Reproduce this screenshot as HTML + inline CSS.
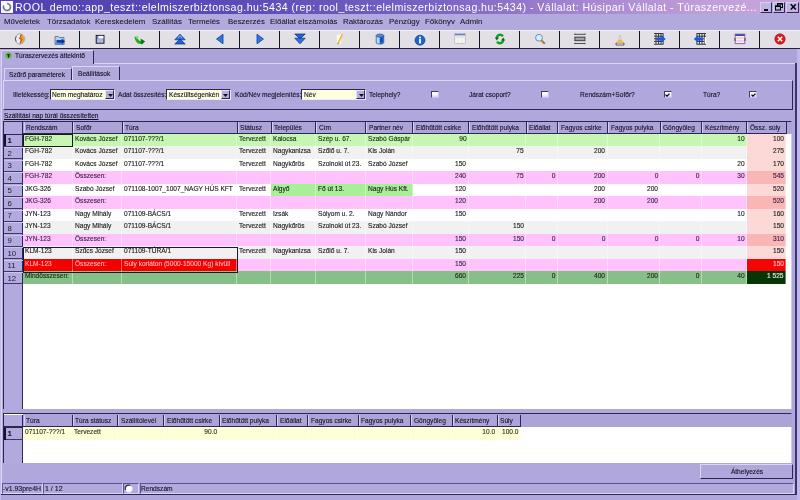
<!DOCTYPE html>
<html><head><meta charset="utf-8">
<style>
*{margin:0;padding:0;box-sizing:border-box}
html,body{width:800px;height:500px;overflow:hidden;background:#b0a8dc;font-family:"Liberation Sans",sans-serif;color:#141224}
.t{position:absolute;white-space:nowrap;text-decoration-skip-ink:none;-webkit-text-stroke:0.14px currentColor}
.b{position:absolute}
#w{position:absolute;left:0;top:0;width:800px;height:500px;filter:blur(0.3px)}
</style></head><body><div id="w">
<div class="b" style="left:0.00px;top:0.00px;width:800.00px;height:13.50px;background:linear-gradient(90deg,#5040b0 0%,#5c4cb8 30%,#7a64c4 55%,#a484d0 72%,#c09ed8 88%,#c8a6dc 100%);"></div>
<div class="b" style="left:1.00px;top:1.00px;width:12.00px;height:12.00px;background:#f6f6fc;"></div>
<svg class="b" style="left:2px;top:2px" width="10" height="10" viewBox="0 0 10 10"><path d="M5 1.5 A3.5 3.5 0 1 1 1.8 3.5" fill="none" stroke="#6a7a7a" stroke-width="1.6"/></svg>
<span class="t" style="top:1.83px;font-size:10.6px;line-height:10.6px;color:#ffffff;left:15.00px;transform:scaleX(1.0);transform-origin:0 0;letter-spacing:0.45px;-webkit-text-stroke:0;">ROOL demo::app_teszt::elelmiszerbiztonsag.hu:5434 (rep: rool_teszt::elelmiszerbiztonsag.hu:5434) - Vállalat: Húsipari Vállalat - Túraszervezé...</span>
<div class="b" style="left:760.00px;top:1.50px;width:12.00px;height:11.00px;background:#bcb4e4;border-style:solid;border-width:1px 1.4px 1.4px 1px;border-color:#d4cef2 #2c2858 #2c2858 #d4cef2;"></div>
<div class="b" style="left:773.00px;top:1.50px;width:12.00px;height:11.00px;background:#bcb4e4;border-style:solid;border-width:1px 1.4px 1.4px 1px;border-color:#d4cef2 #2c2858 #2c2858 #d4cef2;"></div>
<div class="b" style="left:786.00px;top:1.50px;width:13.00px;height:11.00px;background:#bcb4e4;border-style:solid;border-width:1px 1.4px 1.4px 1px;border-color:#d4cef2 #2c2858 #2c2858 #d4cef2;"></div>
<div class="b" style="left:763.50px;top:9.00px;width:4.50px;height:1.50px;background:#000;"></div>
<svg class="b" style="left:774px;top:3px" width="10" height="8" viewBox="0 0 10 8"><rect x="3.5" y="0.5" width="5" height="4" fill="none" stroke="#000" stroke-width="1"/><rect x="1.5" y="2.8" width="5" height="4.2" fill="#b8b0e0" stroke="#000" stroke-width="1"/><rect x="1.5" y="2.8" width="5" height="1.2" fill="#000"/><rect x="3.5" y="0.5" width="5" height="1.2" fill="#000"/></svg>
<svg class="b" style="left:788.5px;top:3px" width="9" height="8" viewBox="0 0 9 8"><path d="M1.8 1.2 L6.8 6.6 M6.8 1.2 L1.8 6.6" stroke="#000" stroke-width="1.4"/></svg>
<div class="b" style="left:0.00px;top:13.50px;width:800.00px;height:16.50px;background:#b2aadc;"></div>
<span class="t" style="top:18.21px;font-size:7.9px;line-height:7.9px;left:4.00px;transform:scaleX(1.0);transform-origin:0 0;-webkit-text-stroke:0.05px currentColor;">Műveletek</span>
<span class="t" style="top:18.21px;font-size:7.9px;line-height:7.9px;left:47.00px;transform:scaleX(1.0);transform-origin:0 0;-webkit-text-stroke:0.05px currentColor;">Törzsadatok</span>
<span class="t" style="top:18.21px;font-size:7.9px;line-height:7.9px;left:95.00px;transform:scaleX(1.0);transform-origin:0 0;-webkit-text-stroke:0.05px currentColor;">Kereskedelem</span>
<span class="t" style="top:18.21px;font-size:7.9px;line-height:7.9px;left:152.00px;transform:scaleX(1.0);transform-origin:0 0;-webkit-text-stroke:0.05px currentColor;">Szállítás</span>
<span class="t" style="top:18.21px;font-size:7.9px;line-height:7.9px;left:188.00px;transform:scaleX(1.0);transform-origin:0 0;-webkit-text-stroke:0.05px currentColor;">Termelés</span>
<span class="t" style="top:18.21px;font-size:7.9px;line-height:7.9px;left:228.00px;transform:scaleX(1.0);transform-origin:0 0;-webkit-text-stroke:0.05px currentColor;">Beszerzés</span>
<span class="t" style="top:18.21px;font-size:7.9px;line-height:7.9px;left:270.00px;transform:scaleX(1.0);transform-origin:0 0;-webkit-text-stroke:0.05px currentColor;">Előállat elszámolás</span>
<span class="t" style="top:18.21px;font-size:7.9px;line-height:7.9px;left:343.00px;transform:scaleX(1.0);transform-origin:0 0;-webkit-text-stroke:0.05px currentColor;">Raktározás</span>
<span class="t" style="top:18.21px;font-size:7.9px;line-height:7.9px;left:389.00px;transform:scaleX(1.0);transform-origin:0 0;-webkit-text-stroke:0.05px currentColor;">Pénzügy</span>
<span class="t" style="top:18.21px;font-size:7.9px;line-height:7.9px;left:425.00px;transform:scaleX(1.0);transform-origin:0 0;-webkit-text-stroke:0.05px currentColor;">Főkönyv</span>
<span class="t" style="top:18.21px;font-size:7.9px;line-height:7.9px;left:460.00px;transform:scaleX(1.0);transform-origin:0 0;-webkit-text-stroke:0.05px currentColor;">Admin</span>
<div class="b" style="left:0.00px;top:29.50px;width:800.00px;height:19.00px;background:#e2e0e4;border-top:1px solid #f4f2f8;border-bottom:1px solid #24223a;"></div>
<div class="b" style="left:39.00px;top:30.50px;width:1.20px;height:17.50px;background:#161428;"></div>
<div class="b" style="left:79.00px;top:30.50px;width:1.20px;height:17.50px;background:#161428;"></div>
<div class="b" style="left:119.00px;top:30.50px;width:1.20px;height:17.50px;background:#161428;"></div>
<div class="b" style="left:159.00px;top:30.50px;width:1.20px;height:17.50px;background:#161428;"></div>
<div class="b" style="left:199.00px;top:30.50px;width:1.20px;height:17.50px;background:#161428;"></div>
<div class="b" style="left:239.00px;top:30.50px;width:1.20px;height:17.50px;background:#161428;"></div>
<div class="b" style="left:279.00px;top:30.50px;width:1.20px;height:17.50px;background:#161428;"></div>
<div class="b" style="left:319.00px;top:30.50px;width:1.20px;height:17.50px;background:#161428;"></div>
<div class="b" style="left:359.00px;top:30.50px;width:1.20px;height:17.50px;background:#161428;"></div>
<div class="b" style="left:399.00px;top:30.50px;width:1.20px;height:17.50px;background:#161428;"></div>
<div class="b" style="left:439.00px;top:30.50px;width:1.20px;height:17.50px;background:#161428;"></div>
<div class="b" style="left:479.00px;top:30.50px;width:1.20px;height:17.50px;background:#161428;"></div>
<div class="b" style="left:519.00px;top:30.50px;width:1.20px;height:17.50px;background:#161428;"></div>
<div class="b" style="left:559.00px;top:30.50px;width:1.20px;height:17.50px;background:#161428;"></div>
<div class="b" style="left:599.00px;top:30.50px;width:1.20px;height:17.50px;background:#161428;"></div>
<div class="b" style="left:639.00px;top:30.50px;width:1.20px;height:17.50px;background:#161428;"></div>
<div class="b" style="left:679.00px;top:30.50px;width:1.20px;height:17.50px;background:#161428;"></div>
<div class="b" style="left:719.00px;top:30.50px;width:1.20px;height:17.50px;background:#161428;"></div>
<div class="b" style="left:759.00px;top:30.50px;width:1.20px;height:17.50px;background:#161428;"></div>
<svg class="b" style="left:14.00px;top:33.00px" width="12" height="12" viewBox="0 0 12 12"><path d="M6 0.8 L8 1.4 L9.8 3 L10.8 6 L9.8 9 L8 10.6 L6 11.2 L4 10.6 L2.2 9 L1.2 6 L2.2 3 L4 1.4Z" fill="#ececf4" stroke="#8a8a9a" stroke-width="0.7"/>
<path d="M6 1.2 L8 1.6 L9.6 3.2 L10.4 6 L9.6 8.8 L8 10.4 L6 10.8Z" fill="#f0a040"/>
<path d="M7.6 1.6 L5.6 5.4 L8 6.2 L6 10.6" fill="none" stroke="#b85c10" stroke-width="1.1"/>
<path d="M2.2 3.4 L1.4 6 L2.2 8.6" fill="none" stroke="#505060" stroke-width="0.9"/></svg>
<svg class="b" style="left:54.00px;top:33.80px" width="12" height="12" viewBox="0 0 12 12"><path d="M1 2.5 H4.5 L5.5 3.5 H10 V10.5 H1Z" fill="#a8d4f4" stroke="#40607a" stroke-width="0.7"/><path d="M1.5 6 H10.5 V10.5 H1.5Z" fill="#5890d8"/>
<path d="M3 6.2 H7.6 V4.6 L11 7.4 L7.6 10 V8.6 H3Z" fill="#0c2ca0"/></svg>
<svg class="b" style="left:94.00px;top:33.30px" width="12" height="12" viewBox="0 0 12 12"><rect x="2.2" y="2.4" width="7.8" height="7.8" fill="#8088b8" stroke="#1c1c38" stroke-width="1"/>
<rect x="4.4" y="2.9" width="5" height="2.6" fill="#ffffff"/><rect x="3" y="6.2" width="6.2" height="3.4" fill="#b0b8e0"/></svg>
<svg class="b" style="left:134.00px;top:33.50px" width="12" height="12" viewBox="0 0 12 12"><path d="M2 2.8 C2.2 7.5 5.5 9.4 8.6 8" fill="none" stroke="#20b020" stroke-width="3.2"/>
<path d="M6.6 4.6 L11.2 7.6 L7.4 10.6Z" fill="#107010"/><circle cx="3.2" cy="3.6" r="1.3" fill="#70e070"/></svg>
<svg class="b" style="left:174.00px;top:33.00px" width="12" height="12" viewBox="0 0 12 12"><path d="M0.8 6.8 L6 1.2 L11.2 6.8Z" fill="#2a74e8" stroke="#0e2a6a" stroke-width="0.7"/>
<path d="M0.8 11 L6 6 L11.2 11Z" fill="#1e64e0" stroke="#0e2a6a" stroke-width="0.7"/><path d="M4 4.6 L6 2.8 L8 4.6" fill="none" stroke="#9cd0ff" stroke-width="0.8"/></svg>
<svg class="b" style="left:214.00px;top:33.20px" width="12" height="12" viewBox="0 0 12 12"><path d="M2.5 6 L9 1.2 L9 10.8Z" fill="#2c78e8" stroke="#103c90" stroke-width="0.8"/></svg>
<svg class="b" style="left:254.00px;top:33.20px" width="12" height="12" viewBox="0 0 12 12"><path d="M9.5 6 L3 1.2 L3 10.8Z" fill="#2c78e8" stroke="#103c90" stroke-width="0.8"/></svg>
<svg class="b" style="left:294.00px;top:33.20px" width="12" height="12" viewBox="0 0 12 12"><path d="M0.8 1 L11.2 1 L6 6Z" fill="#1e64e0" stroke="#0e2a6a" stroke-width="0.7"/>
<path d="M0.8 5.2 L11.2 5.2 L6 10.8Z" fill="#2a74e8" stroke="#0e2a6a" stroke-width="0.7"/></svg>
<svg class="b" style="left:334.00px;top:33.00px" width="12" height="12" viewBox="0 0 12 12"><path d="M2.6 2 L7 1 L7.4 10.4 L3 11.2Z" fill="#fbf8ee"/><path d="M3.6 9.8 L7.6 0.8 L9 1.6 L5 10.6Z" fill="#eeb828"/><path d="M3.6 9.8 L5 10.6 L3.4 11.4Z" fill="#805020"/></svg>
<svg class="b" style="left:374.00px;top:33.20px" width="12" height="12" viewBox="0 0 12 12"><path d="M2.2 2.6 V9.6 C2.2 11.6 9.8 11.6 9.8 9.6 V2.6Z" fill="#3a78d0" stroke="#1a3a80" stroke-width="0.6"/><path d="M2.6 3 V9.4 C3 10.6 5 10.8 5.6 10.6 V3Z" fill="#a8dcf8"/><ellipse cx="6" cy="2.6" rx="3.8" ry="1.6" fill="#5890e0" stroke="#1a3a80" stroke-width="0.6"/><path d="M6.2 5.2 L8.6 4.4 L8.6 9 L6.2 9.8Z" fill="#1048a8"/></svg>
<svg class="b" style="left:414.00px;top:33.50px" width="12" height="12" viewBox="0 0 12 12"><circle cx="6" cy="6.2" r="5" fill="#1c64d0" stroke="#0c3470" stroke-width="0.6"/><circle cx="6" cy="3.6" r="1" fill="#fff"/><rect x="5.1" y="5" width="1.8" height="4.5" fill="#fff"/></svg>
<svg class="b" style="left:454.00px;top:32.50px" width="12" height="12" viewBox="0 0 12 12"><rect x="0.8" y="0.8" width="10.4" height="9.8" fill="#f6f4ec" stroke="#a8a8b8" stroke-width="0.6"/><rect x="0.8" y="0.8" width="10.4" height="1.6" fill="#7080c0"/><path d="M1.5 4 H10.5" stroke="#c0c0cc" stroke-width="0.6"/><path d="M4 5 V10 M7.5 5 V10" stroke="#e0e0e8" stroke-width="0.6"/></svg>
<svg class="b" style="left:494.00px;top:33.20px" width="12" height="12" viewBox="0 0 12 12"><path d="M9 3.2 C7 0.8 3 1.5 2.8 5" fill="none" stroke="#14a020" stroke-width="2.4"/><path d="M3 8.8 C5 11.2 9 10.5 9.2 7" fill="none" stroke="#14a020" stroke-width="2.4"/><path d="M0.8 4.5 L5 4.5 L2.8 7.5Z" fill="#0c7010"/><path d="M11.2 7.5 L7 7.5 L9.2 4.5Z" fill="#0c7010"/></svg>
<svg class="b" style="left:534.00px;top:33.00px" width="12" height="12" viewBox="0 0 12 12"><circle cx="5" cy="4.8" r="3.4" fill="#d8eefc" stroke="#6890b0" stroke-width="1"/><path d="M7.5 7.5 L10.8 10.8" stroke="#b07840" stroke-width="2"/></svg>
<svg class="b" style="left:574.00px;top:33.00px" width="12" height="12" viewBox="0 0 12 12"><path d="M0.4 1.3 H11.4 M0.4 10.5 H11.4" stroke="#404048" stroke-width="0.9"/><rect x="0.9" y="4.1" width="10" height="3.6" fill="#a0a0a8" stroke="#34343c" stroke-width="0.9"/><path d="M0.9 0.6 V2 M10.9 0.6 V2 M0.9 9.8 V11.2 M10.9 9.8 V11.2" stroke="#404048" stroke-width="0.8"/></svg>
<svg class="b" style="left:614.00px;top:33.50px" width="12" height="12" viewBox="0 0 12 12"><path d="M2 9 H10 V11 H2Z" fill="#f8f8f0" stroke="#404040" stroke-width="0.8"/><path d="M2.5 9 L4 6 H8 L9.5 9Z" fill="#f0c040"/><path d="M5 6 L5.5 1.5 L6.8 1.5 L7 6Z" fill="#f8f0e0" stroke="#b0a080" stroke-width="0.5"/></svg>
<svg class="b" style="left:654.00px;top:33.00px" width="12" height="12" viewBox="0 0 12 12"><rect x="-0.5" y="0.6" width="9.6" height="10.6" fill="#f0f0f4" stroke="#202028" stroke-width="0.9"/><path d="M-0.5 3.2 H9 M-0.5 5.8 H9 M-0.5 8.4 H9 M2 0.6 V11 M4.6 0.6 V11 M7 0.6 V11" stroke="#202028" stroke-width="0.9"/><path d="M2.6 4.6 H7.6 V2.6 L11.8 6 L7.6 9.4 V7.4 H2.6Z" fill="#1858e0"/></svg>
<svg class="b" style="left:694.00px;top:33.00px" width="12" height="12" viewBox="0 0 12 12"><rect x="2.9" y="0.6" width="9.6" height="10.6" fill="#f0f0f4" stroke="#202028" stroke-width="0.9"/><path d="M3 3.2 H12.4 M3 5.8 H12.4 M3 8.4 H12.4 M5.4 0.6 V11 M8 0.6 V11 M10.4 0.6 V11" stroke="#202028" stroke-width="0.9"/><rect x="10.6" y="4" width="1.6" height="6.6" fill="#ffffff"/><path d="M9 4.6 H4 V2.6 L-0.2 6 L4 9.4 V7.4 H9Z" fill="#1858e0"/></svg>
<svg class="b" style="left:734.00px;top:32.80px" width="12" height="12" viewBox="0 0 12 12"><rect x="1.2" y="1.2" width="9.6" height="9.4" fill="#f8eef6" stroke="#9a70a0" stroke-width="1.1"/><rect x="1.2" y="1.2" width="9.6" height="1.8" fill="#3a4ab0"/><path d="M2.4 5 H9.6 M2.4 8 H9.6" stroke="#d8b0d8" stroke-width="0.9"/><path d="M1 5 V8 M11 5 V8" stroke="#6a4a80" stroke-width="1.2"/></svg>
<svg class="b" style="left:774.00px;top:33.00px" width="12" height="12" viewBox="0 0 12 12"><circle cx="6" cy="6" r="5.2" fill="#e01818" stroke="#901010" stroke-width="0.6"/><path d="M3.8 3.8 L8.2 8.2 M8.2 3.8 L3.8 8.2" stroke="#fff" stroke-width="1.5"/></svg>
<div class="b" style="left:0.00px;top:48.50px;width:800.00px;height:14.50px;background:#aca4d8;"></div>
<div class="b" style="left:1.00px;top:63.00px;width:796.00px;height:432.00px;background:#b0a8dc;border-top:1px solid #dcd6f2;border-right:1px solid #2a2850;border-bottom:1px solid #2a2850;border-left:1px solid #dcd6f2;"></div>
<div class="b" style="left:1.00px;top:49.50px;width:93.00px;height:14.50px;background:#b2aadc;border-top:1px solid #dcd6f2;border-left:1px solid #dcd6f2;border-right:1.2px solid #2a2850;"></div>
<svg class="b" style="left:4.8px;top:52.4px" width="7" height="7" viewBox="0 0 7 7"><circle cx="3.5" cy="3.5" r="3.2" fill="#6cc040"/><circle cx="3.5" cy="3.5" r="2.2" fill="#58a830"/><path d="M1.8 2.2 H5.2 L4.4 3.2 H2.6Z" fill="#102808"/><rect x="3" y="2.6" width="1.1" height="3" fill="#102808"/></svg>
<span class="t" style="top:51.70px;font-size:7.8px;line-height:7.8px;left:14.50px;transform:scaleX(0.845);transform-origin:0 0;">Túraszervezés áttekintő</span>
<div class="b" style="left:4.00px;top:67.50px;width:68.00px;height:13.00px;background:#aea6da;border-top:1px solid #dcd6f2;border-left:1px solid #dcd6f2;border-right:1px solid #2a2850;"></div>
<span class="t" style="top:70.50px;font-size:7.8px;line-height:7.8px;left:9.00px;transform:scaleX(0.845);transform-origin:0 0;">Szűrő paraméterek</span>
<div class="b" style="left:72.00px;top:65.50px;width:48.00px;height:15.00px;background:#b2aadc;border-top:1px solid #dcd6f2;border-left:1px solid #dcd6f2;border-right:1.2px solid #2a2850;"></div>
<span class="t" style="top:69.50px;font-size:7.8px;line-height:7.8px;left:77.50px;transform:scaleX(0.845);transform-origin:0 0;">Beállítások</span>
<div class="b" style="left:3.00px;top:80.00px;width:790.00px;height:30.00px;background:#b0a8dc;border-top:1px solid #dcd6f2;border-left:1px solid #dcd6f2;border-right:1.2px solid #2a2850;border-bottom:1.5px solid #2a2850;"></div>
<span class="t" style="top:91.00px;font-size:7.8px;line-height:7.8px;left:13.00px;transform:scaleX(0.845);transform-origin:0 0;">Illetékesség:</span>
<div class="b" style="left:49.50px;top:89.20px;width:65.50px;height:11.00px;background:#ffffde;border:1px solid;border-color:#2a2850 #eeeaf8 #eeeaf8 #2a2850;"></div>
<span class="t" style="top:91.00px;font-size:7.8px;line-height:7.8px;left:52.00px;transform:scaleX(0.845);transform-origin:0 0;">Nem meghatároz</span>
<div class="b" style="left:105.00px;top:90.20px;width:9.00px;height:9.00px;background:#b6aedc;border:1px solid;border-color:#e8e4f6 #2a2850 #2a2850 #e8e4f6;"></div>
<svg class="b" style="left:107.50px;top:93.5px" width="5" height="3" viewBox="0 0 5 3"><path d="M0 0 H5 L2.5 3Z" fill="#101020"/></svg>
<span class="t" style="top:91.00px;font-size:7.8px;line-height:7.8px;left:117.50px;transform:scaleX(0.845);transform-origin:0 0;">Adat összesítés:</span>
<div class="b" style="left:166.00px;top:89.20px;width:64.50px;height:11.00px;background:#ffffde;border:1px solid;border-color:#2a2850 #eeeaf8 #eeeaf8 #2a2850;"></div>
<span class="t" style="top:91.00px;font-size:7.8px;line-height:7.8px;left:168.50px;transform:scaleX(0.845);transform-origin:0 0;">Készültségenkén</span>
<div class="b" style="left:220.50px;top:90.20px;width:9.00px;height:9.00px;background:#b6aedc;border:1px solid;border-color:#e8e4f6 #2a2850 #2a2850 #e8e4f6;"></div>
<svg class="b" style="left:223.00px;top:93.5px" width="5" height="3" viewBox="0 0 5 3"><path d="M0 0 H5 L2.5 3Z" fill="#101020"/></svg>
<span class="t" style="top:91.00px;font-size:7.8px;line-height:7.8px;left:235.00px;transform:scaleX(0.845);transform-origin:0 0;">Kód/Név megjelenítés:</span>
<div class="b" style="left:301.00px;top:89.20px;width:65.00px;height:11.00px;background:#ffffde;border:1px solid;border-color:#2a2850 #eeeaf8 #eeeaf8 #2a2850;"></div>
<span class="t" style="top:91.00px;font-size:7.8px;line-height:7.8px;left:303.50px;transform:scaleX(0.845);transform-origin:0 0;">Név</span>
<div class="b" style="left:356.00px;top:90.20px;width:9.00px;height:9.00px;background:#b6aedc;border:1px solid;border-color:#e8e4f6 #2a2850 #2a2850 #e8e4f6;"></div>
<svg class="b" style="left:358.50px;top:93.5px" width="5" height="3" viewBox="0 0 5 3"><path d="M0 0 H5 L2.5 3Z" fill="#101020"/></svg>
<span class="t" style="top:91.00px;font-size:7.8px;line-height:7.8px;left:369.00px;transform:scaleX(0.845);transform-origin:0 0;">Telephely?</span>
<div class="b" style="left:431.00px;top:90.80px;width:8.00px;height:7.60px;background:linear-gradient(180deg,#ffffff 0%,#f6f4fc 50%,#d8d2f0 100%);border:1px solid;border-color:#403c70 #c8c2ea #c8c2ea #403c70;"></div>
<span class="t" style="top:91.00px;font-size:7.8px;line-height:7.8px;left:469.00px;transform:scaleX(0.845);transform-origin:0 0;">Járat csoport?</span>
<div class="b" style="left:541.00px;top:90.80px;width:8.00px;height:7.60px;background:linear-gradient(180deg,#ffffff 0%,#f6f4fc 50%,#d8d2f0 100%);border:1px solid;border-color:#403c70 #c8c2ea #c8c2ea #403c70;"></div>
<span class="t" style="top:91.00px;font-size:7.8px;line-height:7.8px;left:580.00px;transform:scaleX(0.845);transform-origin:0 0;">Rendszám+Sofőr?</span>
<div class="b" style="left:663.50px;top:90.80px;width:8.00px;height:7.60px;background:linear-gradient(180deg,#ffffff 0%,#f6f4fc 50%,#d8d2f0 100%);border:1px solid;border-color:#403c70 #c8c2ea #c8c2ea #403c70;"></div>
<svg class="b" style="left:665.00px;top:92.6px" width="5" height="4" viewBox="0 0 5 4"><path d="M0.5 1.6 L2 3.2 L4.5 0.6" fill="none" stroke="#000" stroke-width="1.2"/></svg>
<span class="t" style="top:91.00px;font-size:7.8px;line-height:7.8px;left:703.00px;transform:scaleX(0.845);transform-origin:0 0;">Túra?</span>
<div class="b" style="left:749.00px;top:90.80px;width:8.00px;height:7.60px;background:linear-gradient(180deg,#ffffff 0%,#f6f4fc 50%,#d8d2f0 100%);border:1px solid;border-color:#403c70 #c8c2ea #c8c2ea #403c70;"></div>
<svg class="b" style="left:750.50px;top:92.6px" width="5" height="4" viewBox="0 0 5 4"><path d="M0.5 1.6 L2 3.2 L4.5 0.6" fill="none" stroke="#000" stroke-width="1.2"/></svg>
<span class="t" style="top:112.40px;font-size:7.8px;line-height:7.8px;left:3.50px;transform:scaleX(0.845);transform-origin:0 0;text-decoration:underline;">Szállítási nap túrái összesítetten</span>
<div class="b" style="left:3.30px;top:121.00px;width:789.00px;height:288.00px;background:#ffffff;border-left:1px solid #2a2850;border-top:1.2px solid #2a2850;border-right:1px solid #d0caf0;"></div>
<div class="b" style="left:4.30px;top:122.00px;width:18.70px;height:287.00px;background:#b2aade;border-right:1px solid #2a2850;"></div>
<div class="b" style="left:23.00px;top:122.00px;width:763.00px;height:11.50px;background:#aca4d8;border-bottom:1.2px solid #2a2850;"></div>
<div class="b" style="left:786.00px;top:122.00px;width:6.00px;height:11.50px;background:#aca4d8;"></div>
<div class="b" style="left:23.60px;top:122.20px;width:1.00px;height:10.50px;background:#d4cef0;"></div>
<div class="b" style="left:73.10px;top:122.20px;width:1.00px;height:10.50px;background:#d4cef0;"></div>
<div class="b" style="left:122.60px;top:122.20px;width:1.00px;height:10.50px;background:#d4cef0;"></div>
<div class="b" style="left:237.60px;top:122.20px;width:1.00px;height:10.50px;background:#d4cef0;"></div>
<div class="b" style="left:271.60px;top:122.20px;width:1.00px;height:10.50px;background:#d4cef0;"></div>
<div class="b" style="left:316.10px;top:122.20px;width:1.00px;height:10.50px;background:#d4cef0;"></div>
<div class="b" style="left:366.10px;top:122.20px;width:1.00px;height:10.50px;background:#d4cef0;"></div>
<div class="b" style="left:413.10px;top:122.20px;width:1.00px;height:10.50px;background:#d4cef0;"></div>
<div class="b" style="left:469.10px;top:122.20px;width:1.00px;height:10.50px;background:#d4cef0;"></div>
<div class="b" style="left:526.60px;top:122.20px;width:1.00px;height:10.50px;background:#d4cef0;"></div>
<div class="b" style="left:558.10px;top:122.20px;width:1.00px;height:10.50px;background:#d4cef0;"></div>
<div class="b" style="left:608.10px;top:122.20px;width:1.00px;height:10.50px;background:#d4cef0;"></div>
<div class="b" style="left:660.60px;top:122.20px;width:1.00px;height:10.50px;background:#d4cef0;"></div>
<div class="b" style="left:702.10px;top:122.20px;width:1.00px;height:10.50px;background:#d4cef0;"></div>
<div class="b" style="left:747.10px;top:122.20px;width:1.00px;height:10.50px;background:#d4cef0;"></div>
<div class="b" style="left:72.00px;top:122.00px;width:1.00px;height:11.50px;background:#2a2850;"></div>
<span class="t" style="top:123.60px;font-size:7.8px;line-height:7.8px;color:#161428;left:26.00px;transform:scaleX(0.845);transform-origin:0 0;">Rendszám</span>
<div class="b" style="left:121.50px;top:122.00px;width:1.00px;height:11.50px;background:#2a2850;"></div>
<span class="t" style="top:123.60px;font-size:7.8px;line-height:7.8px;color:#161428;left:75.50px;transform:scaleX(0.845);transform-origin:0 0;">Sofőr</span>
<div class="b" style="left:236.50px;top:122.00px;width:1.00px;height:11.50px;background:#2a2850;"></div>
<span class="t" style="top:123.60px;font-size:7.8px;line-height:7.8px;color:#161428;left:125.00px;transform:scaleX(0.845);transform-origin:0 0;">Túra</span>
<div class="b" style="left:270.50px;top:122.00px;width:1.00px;height:11.50px;background:#2a2850;"></div>
<span class="t" style="top:123.60px;font-size:7.8px;line-height:7.8px;color:#161428;left:240.00px;transform:scaleX(0.845);transform-origin:0 0;">Státusz</span>
<div class="b" style="left:315.00px;top:122.00px;width:1.00px;height:11.50px;background:#2a2850;"></div>
<span class="t" style="top:123.60px;font-size:7.8px;line-height:7.8px;color:#161428;left:274.00px;transform:scaleX(0.845);transform-origin:0 0;">Település</span>
<div class="b" style="left:365.00px;top:122.00px;width:1.00px;height:11.50px;background:#2a2850;"></div>
<span class="t" style="top:123.60px;font-size:7.8px;line-height:7.8px;color:#161428;left:318.50px;transform:scaleX(0.845);transform-origin:0 0;">Cím</span>
<div class="b" style="left:412.00px;top:122.00px;width:1.00px;height:11.50px;background:#2a2850;"></div>
<span class="t" style="top:123.60px;font-size:7.8px;line-height:7.8px;color:#161428;left:368.50px;transform:scaleX(0.845);transform-origin:0 0;">Partner név</span>
<div class="b" style="left:468.00px;top:122.00px;width:1.00px;height:11.50px;background:#2a2850;"></div>
<span class="t" style="top:123.60px;font-size:7.8px;line-height:7.8px;color:#161428;left:415.50px;transform:scaleX(0.845);transform-origin:0 0;">Előhűtött csirke</span>
<div class="b" style="left:525.50px;top:122.00px;width:1.00px;height:11.50px;background:#2a2850;"></div>
<span class="t" style="top:123.60px;font-size:7.8px;line-height:7.8px;color:#161428;left:471.50px;transform:scaleX(0.845);transform-origin:0 0;">Előhűtött pulyka</span>
<div class="b" style="left:557.00px;top:122.00px;width:1.00px;height:11.50px;background:#2a2850;"></div>
<span class="t" style="top:123.60px;font-size:7.8px;line-height:7.8px;color:#161428;left:529.00px;transform:scaleX(0.845);transform-origin:0 0;">Előállat</span>
<div class="b" style="left:607.00px;top:122.00px;width:1.00px;height:11.50px;background:#2a2850;"></div>
<span class="t" style="top:123.60px;font-size:7.8px;line-height:7.8px;color:#161428;left:560.50px;transform:scaleX(0.845);transform-origin:0 0;">Fagyos csirke</span>
<div class="b" style="left:659.50px;top:122.00px;width:1.00px;height:11.50px;background:#2a2850;"></div>
<span class="t" style="top:123.60px;font-size:7.8px;line-height:7.8px;color:#161428;left:610.50px;transform:scaleX(0.845);transform-origin:0 0;">Fagyos pulyka</span>
<div class="b" style="left:701.00px;top:122.00px;width:1.00px;height:11.50px;background:#2a2850;"></div>
<span class="t" style="top:123.60px;font-size:7.8px;line-height:7.8px;color:#161428;left:663.00px;transform:scaleX(0.845);transform-origin:0 0;">Göngyöleg</span>
<div class="b" style="left:746.00px;top:122.00px;width:1.00px;height:11.50px;background:#2a2850;"></div>
<span class="t" style="top:123.60px;font-size:7.8px;line-height:7.8px;color:#161428;left:704.50px;transform:scaleX(0.845);transform-origin:0 0;">Készítmény</span>
<div class="b" style="left:785.50px;top:122.00px;width:1.00px;height:11.50px;background:#2a2850;"></div>
<span class="t" style="top:123.60px;font-size:7.8px;line-height:7.8px;color:#161428;left:749.50px;transform:scaleX(0.845);transform-origin:0 0;">Össz. súly</span>
<div class="b" style="left:23.00px;top:133.50px;width:763.00px;height:12.50px;background:#c6f6b2;"></div>
<div class="b" style="left:4.30px;top:145.50px;width:18.70px;height:1.00px;background:#3a3866;"></div>
<span class="t" style="top:137.10px;font-size:7.8px;line-height:7.8px;color:#1e1c30;left:7.50px;transform:scaleX(1.0);transform-origin:0 0;font-weight:bold;">1</span>
<div class="b" style="left:71.90px;top:133.50px;width:0.80px;height:12.50px;background:rgba(255,255,255,0.4);"></div>
<span class="t" style="top:134.90px;font-size:7.8px;line-height:7.8px;color:#1c2a18;left:25.30px;transform:scaleX(0.845);transform-origin:0 0;">FGH-782</span>
<div class="b" style="left:121.40px;top:133.50px;width:0.80px;height:12.50px;background:rgba(255,255,255,0.4);"></div>
<span class="t" style="top:134.90px;font-size:7.8px;line-height:7.8px;color:#1c2a18;left:74.80px;transform:scaleX(0.845);transform-origin:0 0;">Kovács József</span>
<div class="b" style="left:236.40px;top:133.50px;width:0.80px;height:12.50px;background:rgba(255,255,255,0.4);"></div>
<span class="t" style="top:134.90px;font-size:7.8px;line-height:7.8px;color:#1c2a18;left:124.30px;transform:scaleX(0.845);transform-origin:0 0;">071107-???/1</span>
<div class="b" style="left:270.40px;top:133.50px;width:0.80px;height:12.50px;background:rgba(255,255,255,0.4);"></div>
<span class="t" style="top:134.90px;font-size:7.8px;line-height:7.8px;color:#1c2a18;left:239.30px;transform:scaleX(0.845);transform-origin:0 0;">Tervezett</span>
<div class="b" style="left:314.90px;top:133.50px;width:0.80px;height:12.50px;background:rgba(255,255,255,0.4);"></div>
<span class="t" style="top:134.90px;font-size:7.8px;line-height:7.8px;color:#1c2a18;left:273.30px;transform:scaleX(0.845);transform-origin:0 0;">Kalocsa</span>
<div class="b" style="left:364.90px;top:133.50px;width:0.80px;height:12.50px;background:rgba(255,255,255,0.4);"></div>
<span class="t" style="top:134.90px;font-size:7.8px;line-height:7.8px;color:#1c2a18;left:317.80px;transform:scaleX(0.845);transform-origin:0 0;">Szép u. 67.</span>
<div class="b" style="left:411.90px;top:133.50px;width:0.80px;height:12.50px;background:rgba(255,255,255,0.4);"></div>
<span class="t" style="top:134.90px;font-size:7.8px;line-height:7.8px;color:#1c2a18;left:367.80px;transform:scaleX(0.845);transform-origin:0 0;">Szabó Gáspár</span>
<div class="b" style="left:467.90px;top:133.50px;width:0.80px;height:12.50px;background:rgba(255,255,255,0.4);"></div>
<span class="t" style="top:134.90px;font-size:7.8px;line-height:7.8px;color:#1c2a18;right:333.50px;transform:scaleX(0.845);transform-origin:100% 0;">90</span>
<div class="b" style="left:525.40px;top:133.50px;width:0.80px;height:12.50px;background:rgba(255,255,255,0.4);"></div>
<div class="b" style="left:556.90px;top:133.50px;width:0.80px;height:12.50px;background:rgba(255,255,255,0.4);"></div>
<div class="b" style="left:606.90px;top:133.50px;width:0.80px;height:12.50px;background:rgba(255,255,255,0.4);"></div>
<div class="b" style="left:659.40px;top:133.50px;width:0.80px;height:12.50px;background:rgba(255,255,255,0.4);"></div>
<div class="b" style="left:700.90px;top:133.50px;width:0.80px;height:12.50px;background:rgba(255,255,255,0.4);"></div>
<div class="b" style="left:745.90px;top:133.50px;width:0.80px;height:12.50px;background:rgba(255,255,255,0.4);"></div>
<span class="t" style="top:134.90px;font-size:7.8px;line-height:7.8px;color:#1c2a18;right:55.50px;transform:scaleX(0.845);transform-origin:100% 0;">10</span>
<div class="b" style="left:746.50px;top:133.50px;width:39.50px;height:12.50px;background:#fcd8d6;"></div>
<div class="b" style="left:785.40px;top:133.50px;width:0.80px;height:12.50px;background:rgba(255,255,255,0.4);"></div>
<span class="t" style="top:134.90px;font-size:7.8px;line-height:7.8px;color:#1c2a18;right:16.00px;transform:scaleX(0.845);transform-origin:100% 0;">100</span>
<div class="b" style="left:23.00px;top:146.00px;width:763.00px;height:12.50px;background:#f2f1f1;"></div>
<div class="b" style="left:4.30px;top:147.00px;width:18.70px;height:0.80px;background:#ccc6ec;"></div>
<div class="b" style="left:4.30px;top:158.00px;width:18.70px;height:1.00px;background:#3a3866;"></div>
<span class="t" style="top:149.60px;font-size:7.8px;line-height:7.8px;color:#1e1c30;left:7.50px;transform:scaleX(1.0);transform-origin:0 0;-webkit-text-stroke:0;">2</span>
<div class="b" style="left:71.90px;top:146.00px;width:0.80px;height:12.50px;background:rgba(255,255,255,0.4);"></div>
<span class="t" style="top:147.40px;font-size:7.8px;line-height:7.8px;color:#202020;left:25.30px;transform:scaleX(0.845);transform-origin:0 0;">FGH-782</span>
<div class="b" style="left:121.40px;top:146.00px;width:0.80px;height:12.50px;background:rgba(255,255,255,0.4);"></div>
<span class="t" style="top:147.40px;font-size:7.8px;line-height:7.8px;color:#202020;left:74.80px;transform:scaleX(0.845);transform-origin:0 0;">Kovács József</span>
<div class="b" style="left:236.40px;top:146.00px;width:0.80px;height:12.50px;background:rgba(255,255,255,0.4);"></div>
<span class="t" style="top:147.40px;font-size:7.8px;line-height:7.8px;color:#202020;left:124.30px;transform:scaleX(0.845);transform-origin:0 0;">071107-???/1</span>
<div class="b" style="left:270.40px;top:146.00px;width:0.80px;height:12.50px;background:rgba(255,255,255,0.4);"></div>
<span class="t" style="top:147.40px;font-size:7.8px;line-height:7.8px;color:#202020;left:239.30px;transform:scaleX(0.845);transform-origin:0 0;">Tervezett</span>
<div class="b" style="left:314.90px;top:146.00px;width:0.80px;height:12.50px;background:rgba(255,255,255,0.4);"></div>
<span class="t" style="top:147.40px;font-size:7.8px;line-height:7.8px;color:#202020;left:273.30px;transform:scaleX(0.845);transform-origin:0 0;">Nagykanizsa</span>
<div class="b" style="left:364.90px;top:146.00px;width:0.80px;height:12.50px;background:rgba(255,255,255,0.4);"></div>
<span class="t" style="top:147.40px;font-size:7.8px;line-height:7.8px;color:#202020;left:317.80px;transform:scaleX(0.845);transform-origin:0 0;">Szőlő u. 7.</span>
<div class="b" style="left:411.90px;top:146.00px;width:0.80px;height:12.50px;background:rgba(255,255,255,0.4);"></div>
<span class="t" style="top:147.40px;font-size:7.8px;line-height:7.8px;color:#202020;left:367.80px;transform:scaleX(0.845);transform-origin:0 0;">Kis Jolán</span>
<div class="b" style="left:467.90px;top:146.00px;width:0.80px;height:12.50px;background:rgba(255,255,255,0.4);"></div>
<div class="b" style="left:525.40px;top:146.00px;width:0.80px;height:12.50px;background:rgba(255,255,255,0.4);"></div>
<span class="t" style="top:147.40px;font-size:7.8px;line-height:7.8px;color:#202020;right:276.00px;transform:scaleX(0.845);transform-origin:100% 0;">75</span>
<div class="b" style="left:556.90px;top:146.00px;width:0.80px;height:12.50px;background:rgba(255,255,255,0.4);"></div>
<div class="b" style="left:606.90px;top:146.00px;width:0.80px;height:12.50px;background:rgba(255,255,255,0.4);"></div>
<span class="t" style="top:147.40px;font-size:7.8px;line-height:7.8px;color:#202020;right:194.50px;transform:scaleX(0.845);transform-origin:100% 0;">200</span>
<div class="b" style="left:659.40px;top:146.00px;width:0.80px;height:12.50px;background:rgba(255,255,255,0.4);"></div>
<div class="b" style="left:700.90px;top:146.00px;width:0.80px;height:12.50px;background:rgba(255,255,255,0.4);"></div>
<div class="b" style="left:745.90px;top:146.00px;width:0.80px;height:12.50px;background:rgba(255,255,255,0.4);"></div>
<div class="b" style="left:746.50px;top:146.00px;width:39.50px;height:12.50px;background:#fcd8d6;"></div>
<div class="b" style="left:785.40px;top:146.00px;width:0.80px;height:12.50px;background:rgba(255,255,255,0.4);"></div>
<span class="t" style="top:147.40px;font-size:7.8px;line-height:7.8px;color:#202020;right:16.00px;transform:scaleX(0.845);transform-origin:100% 0;">275</span>
<div class="b" style="left:23.00px;top:158.50px;width:763.00px;height:12.50px;background:#ffffff;"></div>
<div class="b" style="left:4.30px;top:159.50px;width:18.70px;height:0.80px;background:#ccc6ec;"></div>
<div class="b" style="left:4.30px;top:170.50px;width:18.70px;height:1.00px;background:#3a3866;"></div>
<span class="t" style="top:162.10px;font-size:7.8px;line-height:7.8px;color:#1e1c30;left:7.50px;transform:scaleX(1.0);transform-origin:0 0;-webkit-text-stroke:0;">3</span>
<div class="b" style="left:71.90px;top:158.50px;width:0.80px;height:12.50px;background:rgba(255,255,255,0.4);"></div>
<span class="t" style="top:159.90px;font-size:7.8px;line-height:7.8px;color:#202020;left:25.30px;transform:scaleX(0.845);transform-origin:0 0;">FGH-782</span>
<div class="b" style="left:121.40px;top:158.50px;width:0.80px;height:12.50px;background:rgba(255,255,255,0.4);"></div>
<span class="t" style="top:159.90px;font-size:7.8px;line-height:7.8px;color:#202020;left:74.80px;transform:scaleX(0.845);transform-origin:0 0;">Kovács József</span>
<div class="b" style="left:236.40px;top:158.50px;width:0.80px;height:12.50px;background:rgba(255,255,255,0.4);"></div>
<span class="t" style="top:159.90px;font-size:7.8px;line-height:7.8px;color:#202020;left:124.30px;transform:scaleX(0.845);transform-origin:0 0;">071107-???/1</span>
<div class="b" style="left:270.40px;top:158.50px;width:0.80px;height:12.50px;background:rgba(255,255,255,0.4);"></div>
<span class="t" style="top:159.90px;font-size:7.8px;line-height:7.8px;color:#202020;left:239.30px;transform:scaleX(0.845);transform-origin:0 0;">Tervezett</span>
<div class="b" style="left:314.90px;top:158.50px;width:0.80px;height:12.50px;background:rgba(255,255,255,0.4);"></div>
<span class="t" style="top:159.90px;font-size:7.8px;line-height:7.8px;color:#202020;left:273.30px;transform:scaleX(0.845);transform-origin:0 0;">Nagykőrös</span>
<div class="b" style="left:364.90px;top:158.50px;width:0.80px;height:12.50px;background:rgba(255,255,255,0.4);"></div>
<span class="t" style="top:159.90px;font-size:7.8px;line-height:7.8px;color:#202020;left:317.80px;transform:scaleX(0.845);transform-origin:0 0;">Szolnoki út 23.</span>
<div class="b" style="left:411.90px;top:158.50px;width:0.80px;height:12.50px;background:rgba(255,255,255,0.4);"></div>
<span class="t" style="top:159.90px;font-size:7.8px;line-height:7.8px;color:#202020;left:367.80px;transform:scaleX(0.845);transform-origin:0 0;">Szabó József</span>
<div class="b" style="left:467.90px;top:158.50px;width:0.80px;height:12.50px;background:rgba(255,255,255,0.4);"></div>
<span class="t" style="top:159.90px;font-size:7.8px;line-height:7.8px;color:#202020;right:333.50px;transform:scaleX(0.845);transform-origin:100% 0;">150</span>
<div class="b" style="left:525.40px;top:158.50px;width:0.80px;height:12.50px;background:rgba(255,255,255,0.4);"></div>
<div class="b" style="left:556.90px;top:158.50px;width:0.80px;height:12.50px;background:rgba(255,255,255,0.4);"></div>
<div class="b" style="left:606.90px;top:158.50px;width:0.80px;height:12.50px;background:rgba(255,255,255,0.4);"></div>
<div class="b" style="left:659.40px;top:158.50px;width:0.80px;height:12.50px;background:rgba(255,255,255,0.4);"></div>
<div class="b" style="left:700.90px;top:158.50px;width:0.80px;height:12.50px;background:rgba(255,255,255,0.4);"></div>
<div class="b" style="left:745.90px;top:158.50px;width:0.80px;height:12.50px;background:rgba(255,255,255,0.4);"></div>
<span class="t" style="top:159.90px;font-size:7.8px;line-height:7.8px;color:#202020;right:55.50px;transform:scaleX(0.845);transform-origin:100% 0;">20</span>
<div class="b" style="left:746.50px;top:158.50px;width:39.50px;height:12.50px;background:#fcd8d6;"></div>
<div class="b" style="left:785.40px;top:158.50px;width:0.80px;height:12.50px;background:rgba(255,255,255,0.4);"></div>
<span class="t" style="top:159.90px;font-size:7.8px;line-height:7.8px;color:#202020;right:16.00px;transform:scaleX(0.845);transform-origin:100% 0;">170</span>
<div class="b" style="left:23.00px;top:171.00px;width:763.00px;height:12.50px;background:#ffc2fc;"></div>
<div class="b" style="left:4.30px;top:172.00px;width:18.70px;height:0.80px;background:#ccc6ec;"></div>
<div class="b" style="left:4.30px;top:183.00px;width:18.70px;height:1.00px;background:#3a3866;"></div>
<span class="t" style="top:174.60px;font-size:7.8px;line-height:7.8px;color:#1e1c30;left:7.50px;transform:scaleX(1.0);transform-origin:0 0;-webkit-text-stroke:0;">4</span>
<div class="b" style="left:71.90px;top:171.00px;width:0.80px;height:12.50px;background:rgba(255,255,255,0.4);"></div>
<span class="t" style="top:172.40px;font-size:7.8px;line-height:7.8px;color:#3a1c48;left:25.30px;transform:scaleX(0.845);transform-origin:0 0;">FGH-782</span>
<div class="b" style="left:121.40px;top:171.00px;width:0.80px;height:12.50px;background:rgba(255,255,255,0.4);"></div>
<span class="t" style="top:172.40px;font-size:7.8px;line-height:7.8px;color:#3a1c48;left:74.80px;transform:scaleX(0.845);transform-origin:0 0;">Összesen:</span>
<div class="b" style="left:236.40px;top:171.00px;width:0.80px;height:12.50px;background:rgba(255,255,255,0.4);"></div>
<div class="b" style="left:270.40px;top:171.00px;width:0.80px;height:12.50px;background:rgba(255,255,255,0.4);"></div>
<div class="b" style="left:314.90px;top:171.00px;width:0.80px;height:12.50px;background:rgba(255,255,255,0.4);"></div>
<div class="b" style="left:364.90px;top:171.00px;width:0.80px;height:12.50px;background:rgba(255,255,255,0.4);"></div>
<div class="b" style="left:411.90px;top:171.00px;width:0.80px;height:12.50px;background:rgba(255,255,255,0.4);"></div>
<div class="b" style="left:467.90px;top:171.00px;width:0.80px;height:12.50px;background:rgba(255,255,255,0.4);"></div>
<span class="t" style="top:172.40px;font-size:7.8px;line-height:7.8px;color:#3a1c48;right:333.50px;transform:scaleX(0.845);transform-origin:100% 0;">240</span>
<div class="b" style="left:525.40px;top:171.00px;width:0.80px;height:12.50px;background:rgba(255,255,255,0.4);"></div>
<span class="t" style="top:172.40px;font-size:7.8px;line-height:7.8px;color:#3a1c48;right:276.00px;transform:scaleX(0.845);transform-origin:100% 0;">75</span>
<div class="b" style="left:556.90px;top:171.00px;width:0.80px;height:12.50px;background:rgba(255,255,255,0.4);"></div>
<span class="t" style="top:172.40px;font-size:7.8px;line-height:7.8px;color:#3a1c48;right:244.50px;transform:scaleX(0.845);transform-origin:100% 0;">0</span>
<div class="b" style="left:606.90px;top:171.00px;width:0.80px;height:12.50px;background:rgba(255,255,255,0.4);"></div>
<span class="t" style="top:172.40px;font-size:7.8px;line-height:7.8px;color:#3a1c48;right:194.50px;transform:scaleX(0.845);transform-origin:100% 0;">200</span>
<div class="b" style="left:659.40px;top:171.00px;width:0.80px;height:12.50px;background:rgba(255,255,255,0.4);"></div>
<span class="t" style="top:172.40px;font-size:7.8px;line-height:7.8px;color:#3a1c48;right:142.00px;transform:scaleX(0.845);transform-origin:100% 0;">0</span>
<div class="b" style="left:700.90px;top:171.00px;width:0.80px;height:12.50px;background:rgba(255,255,255,0.4);"></div>
<span class="t" style="top:172.40px;font-size:7.8px;line-height:7.8px;color:#3a1c48;right:100.50px;transform:scaleX(0.845);transform-origin:100% 0;">0</span>
<div class="b" style="left:745.90px;top:171.00px;width:0.80px;height:12.50px;background:rgba(255,255,255,0.4);"></div>
<span class="t" style="top:172.40px;font-size:7.8px;line-height:7.8px;color:#3a1c48;right:55.50px;transform:scaleX(0.845);transform-origin:100% 0;">30</span>
<div class="b" style="left:746.50px;top:171.00px;width:39.50px;height:12.50px;background:#f9b6b4;"></div>
<div class="b" style="left:785.40px;top:171.00px;width:0.80px;height:12.50px;background:rgba(255,255,255,0.4);"></div>
<span class="t" style="top:172.40px;font-size:7.8px;line-height:7.8px;color:#3a1c48;right:16.00px;transform:scaleX(0.845);transform-origin:100% 0;">545</span>
<div class="b" style="left:23.00px;top:183.50px;width:763.00px;height:12.50px;background:#ffffff;"></div>
<div class="b" style="left:4.30px;top:184.50px;width:18.70px;height:0.80px;background:#ccc6ec;"></div>
<div class="b" style="left:4.30px;top:195.50px;width:18.70px;height:1.00px;background:#3a3866;"></div>
<span class="t" style="top:187.10px;font-size:7.8px;line-height:7.8px;color:#1e1c30;left:7.50px;transform:scaleX(1.0);transform-origin:0 0;-webkit-text-stroke:0;">5</span>
<div class="b" style="left:71.90px;top:183.50px;width:0.80px;height:12.50px;background:rgba(255,255,255,0.4);"></div>
<span class="t" style="top:184.90px;font-size:7.8px;line-height:7.8px;color:#202020;left:25.30px;transform:scaleX(0.845);transform-origin:0 0;">JKG-326</span>
<div class="b" style="left:121.40px;top:183.50px;width:0.80px;height:12.50px;background:rgba(255,255,255,0.4);"></div>
<span class="t" style="top:184.90px;font-size:7.8px;line-height:7.8px;color:#202020;left:74.80px;transform:scaleX(0.845);transform-origin:0 0;">Szabó József</span>
<div class="b" style="left:236.40px;top:183.50px;width:0.80px;height:12.50px;background:rgba(255,255,255,0.4);"></div>
<span class="t" style="top:184.90px;font-size:7.8px;line-height:7.8px;color:#202020;left:124.30px;transform:scaleX(0.845);transform-origin:0 0;">071108-1007_1007_NAGY HÚS KFT</span>
<div class="b" style="left:270.40px;top:183.50px;width:0.80px;height:12.50px;background:rgba(255,255,255,0.4);"></div>
<span class="t" style="top:184.90px;font-size:7.8px;line-height:7.8px;color:#202020;left:239.30px;transform:scaleX(0.845);transform-origin:0 0;">Tervezett</span>
<div class="b" style="left:271.00px;top:183.50px;width:44.50px;height:12.50px;background:#a8f098;"></div>
<div class="b" style="left:314.90px;top:183.50px;width:0.80px;height:12.50px;background:rgba(255,255,255,0.4);"></div>
<span class="t" style="top:184.90px;font-size:7.8px;line-height:7.8px;color:#202020;left:273.30px;transform:scaleX(0.845);transform-origin:0 0;">Algyő</span>
<div class="b" style="left:315.50px;top:183.50px;width:50.00px;height:12.50px;background:#a8f098;"></div>
<div class="b" style="left:364.90px;top:183.50px;width:0.80px;height:12.50px;background:rgba(255,255,255,0.4);"></div>
<span class="t" style="top:184.90px;font-size:7.8px;line-height:7.8px;color:#202020;left:317.80px;transform:scaleX(0.845);transform-origin:0 0;">Fő út 13.</span>
<div class="b" style="left:365.50px;top:183.50px;width:47.00px;height:12.50px;background:#a8f098;"></div>
<div class="b" style="left:411.90px;top:183.50px;width:0.80px;height:12.50px;background:rgba(255,255,255,0.4);"></div>
<span class="t" style="top:184.90px;font-size:7.8px;line-height:7.8px;color:#202020;left:367.80px;transform:scaleX(0.845);transform-origin:0 0;">Nagy Hús Kft.</span>
<div class="b" style="left:467.90px;top:183.50px;width:0.80px;height:12.50px;background:rgba(255,255,255,0.4);"></div>
<span class="t" style="top:184.90px;font-size:7.8px;line-height:7.8px;color:#202020;right:333.50px;transform:scaleX(0.845);transform-origin:100% 0;">120</span>
<div class="b" style="left:525.40px;top:183.50px;width:0.80px;height:12.50px;background:rgba(255,255,255,0.4);"></div>
<div class="b" style="left:556.90px;top:183.50px;width:0.80px;height:12.50px;background:rgba(255,255,255,0.4);"></div>
<div class="b" style="left:606.90px;top:183.50px;width:0.80px;height:12.50px;background:rgba(255,255,255,0.4);"></div>
<span class="t" style="top:184.90px;font-size:7.8px;line-height:7.8px;color:#202020;right:194.50px;transform:scaleX(0.845);transform-origin:100% 0;">200</span>
<div class="b" style="left:659.40px;top:183.50px;width:0.80px;height:12.50px;background:rgba(255,255,255,0.4);"></div>
<span class="t" style="top:184.90px;font-size:7.8px;line-height:7.8px;color:#202020;right:142.00px;transform:scaleX(0.845);transform-origin:100% 0;">200</span>
<div class="b" style="left:700.90px;top:183.50px;width:0.80px;height:12.50px;background:rgba(255,255,255,0.4);"></div>
<div class="b" style="left:745.90px;top:183.50px;width:0.80px;height:12.50px;background:rgba(255,255,255,0.4);"></div>
<div class="b" style="left:746.50px;top:183.50px;width:39.50px;height:12.50px;background:#fcd8d6;"></div>
<div class="b" style="left:785.40px;top:183.50px;width:0.80px;height:12.50px;background:rgba(255,255,255,0.4);"></div>
<span class="t" style="top:184.90px;font-size:7.8px;line-height:7.8px;color:#202020;right:16.00px;transform:scaleX(0.845);transform-origin:100% 0;">520</span>
<div class="b" style="left:23.00px;top:196.00px;width:763.00px;height:12.50px;background:#ffc2fc;"></div>
<div class="b" style="left:4.30px;top:197.00px;width:18.70px;height:0.80px;background:#ccc6ec;"></div>
<div class="b" style="left:4.30px;top:208.00px;width:18.70px;height:1.00px;background:#3a3866;"></div>
<span class="t" style="top:199.60px;font-size:7.8px;line-height:7.8px;color:#1e1c30;left:7.50px;transform:scaleX(1.0);transform-origin:0 0;-webkit-text-stroke:0;">6</span>
<div class="b" style="left:71.90px;top:196.00px;width:0.80px;height:12.50px;background:rgba(255,255,255,0.4);"></div>
<span class="t" style="top:197.40px;font-size:7.8px;line-height:7.8px;color:#3a1c48;left:25.30px;transform:scaleX(0.845);transform-origin:0 0;">JKG-326</span>
<div class="b" style="left:121.40px;top:196.00px;width:0.80px;height:12.50px;background:rgba(255,255,255,0.4);"></div>
<span class="t" style="top:197.40px;font-size:7.8px;line-height:7.8px;color:#3a1c48;left:74.80px;transform:scaleX(0.845);transform-origin:0 0;">Összesen:</span>
<div class="b" style="left:236.40px;top:196.00px;width:0.80px;height:12.50px;background:rgba(255,255,255,0.4);"></div>
<div class="b" style="left:270.40px;top:196.00px;width:0.80px;height:12.50px;background:rgba(255,255,255,0.4);"></div>
<div class="b" style="left:314.90px;top:196.00px;width:0.80px;height:12.50px;background:rgba(255,255,255,0.4);"></div>
<div class="b" style="left:364.90px;top:196.00px;width:0.80px;height:12.50px;background:rgba(255,255,255,0.4);"></div>
<div class="b" style="left:411.90px;top:196.00px;width:0.80px;height:12.50px;background:rgba(255,255,255,0.4);"></div>
<div class="b" style="left:467.90px;top:196.00px;width:0.80px;height:12.50px;background:rgba(255,255,255,0.4);"></div>
<span class="t" style="top:197.40px;font-size:7.8px;line-height:7.8px;color:#3a1c48;right:333.50px;transform:scaleX(0.845);transform-origin:100% 0;">120</span>
<div class="b" style="left:525.40px;top:196.00px;width:0.80px;height:12.50px;background:rgba(255,255,255,0.4);"></div>
<div class="b" style="left:556.90px;top:196.00px;width:0.80px;height:12.50px;background:rgba(255,255,255,0.4);"></div>
<div class="b" style="left:606.90px;top:196.00px;width:0.80px;height:12.50px;background:rgba(255,255,255,0.4);"></div>
<span class="t" style="top:197.40px;font-size:7.8px;line-height:7.8px;color:#3a1c48;right:194.50px;transform:scaleX(0.845);transform-origin:100% 0;">200</span>
<div class="b" style="left:659.40px;top:196.00px;width:0.80px;height:12.50px;background:rgba(255,255,255,0.4);"></div>
<span class="t" style="top:197.40px;font-size:7.8px;line-height:7.8px;color:#3a1c48;right:142.00px;transform:scaleX(0.845);transform-origin:100% 0;">200</span>
<div class="b" style="left:700.90px;top:196.00px;width:0.80px;height:12.50px;background:rgba(255,255,255,0.4);"></div>
<div class="b" style="left:745.90px;top:196.00px;width:0.80px;height:12.50px;background:rgba(255,255,255,0.4);"></div>
<div class="b" style="left:746.50px;top:196.00px;width:39.50px;height:12.50px;background:#f9b6b4;"></div>
<div class="b" style="left:785.40px;top:196.00px;width:0.80px;height:12.50px;background:rgba(255,255,255,0.4);"></div>
<span class="t" style="top:197.40px;font-size:7.8px;line-height:7.8px;color:#3a1c48;right:16.00px;transform:scaleX(0.845);transform-origin:100% 0;">520</span>
<div class="b" style="left:23.00px;top:208.50px;width:763.00px;height:12.50px;background:#ffffff;"></div>
<div class="b" style="left:4.30px;top:209.50px;width:18.70px;height:0.80px;background:#ccc6ec;"></div>
<div class="b" style="left:4.30px;top:220.50px;width:18.70px;height:1.00px;background:#3a3866;"></div>
<span class="t" style="top:212.10px;font-size:7.8px;line-height:7.8px;color:#1e1c30;left:7.50px;transform:scaleX(1.0);transform-origin:0 0;-webkit-text-stroke:0;">7</span>
<div class="b" style="left:71.90px;top:208.50px;width:0.80px;height:12.50px;background:rgba(255,255,255,0.4);"></div>
<span class="t" style="top:209.90px;font-size:7.8px;line-height:7.8px;color:#202020;left:25.30px;transform:scaleX(0.845);transform-origin:0 0;">JYN-123</span>
<div class="b" style="left:121.40px;top:208.50px;width:0.80px;height:12.50px;background:rgba(255,255,255,0.4);"></div>
<span class="t" style="top:209.90px;font-size:7.8px;line-height:7.8px;color:#202020;left:74.80px;transform:scaleX(0.845);transform-origin:0 0;">Nagy Mihály</span>
<div class="b" style="left:236.40px;top:208.50px;width:0.80px;height:12.50px;background:rgba(255,255,255,0.4);"></div>
<span class="t" style="top:209.90px;font-size:7.8px;line-height:7.8px;color:#202020;left:124.30px;transform:scaleX(0.845);transform-origin:0 0;">071109-BÁCS/1</span>
<div class="b" style="left:270.40px;top:208.50px;width:0.80px;height:12.50px;background:rgba(255,255,255,0.4);"></div>
<span class="t" style="top:209.90px;font-size:7.8px;line-height:7.8px;color:#202020;left:239.30px;transform:scaleX(0.845);transform-origin:0 0;">Tervezett</span>
<div class="b" style="left:314.90px;top:208.50px;width:0.80px;height:12.50px;background:rgba(255,255,255,0.4);"></div>
<span class="t" style="top:209.90px;font-size:7.8px;line-height:7.8px;color:#202020;left:273.30px;transform:scaleX(0.845);transform-origin:0 0;">Izsák</span>
<div class="b" style="left:364.90px;top:208.50px;width:0.80px;height:12.50px;background:rgba(255,255,255,0.4);"></div>
<span class="t" style="top:209.90px;font-size:7.8px;line-height:7.8px;color:#202020;left:317.80px;transform:scaleX(0.845);transform-origin:0 0;">Sólyom u. 2.</span>
<div class="b" style="left:411.90px;top:208.50px;width:0.80px;height:12.50px;background:rgba(255,255,255,0.4);"></div>
<span class="t" style="top:209.90px;font-size:7.8px;line-height:7.8px;color:#202020;left:367.80px;transform:scaleX(0.845);transform-origin:0 0;">Nagy Nándor</span>
<div class="b" style="left:467.90px;top:208.50px;width:0.80px;height:12.50px;background:rgba(255,255,255,0.4);"></div>
<span class="t" style="top:209.90px;font-size:7.8px;line-height:7.8px;color:#202020;right:333.50px;transform:scaleX(0.845);transform-origin:100% 0;">150</span>
<div class="b" style="left:525.40px;top:208.50px;width:0.80px;height:12.50px;background:rgba(255,255,255,0.4);"></div>
<div class="b" style="left:556.90px;top:208.50px;width:0.80px;height:12.50px;background:rgba(255,255,255,0.4);"></div>
<div class="b" style="left:606.90px;top:208.50px;width:0.80px;height:12.50px;background:rgba(255,255,255,0.4);"></div>
<div class="b" style="left:659.40px;top:208.50px;width:0.80px;height:12.50px;background:rgba(255,255,255,0.4);"></div>
<div class="b" style="left:700.90px;top:208.50px;width:0.80px;height:12.50px;background:rgba(255,255,255,0.4);"></div>
<div class="b" style="left:745.90px;top:208.50px;width:0.80px;height:12.50px;background:rgba(255,255,255,0.4);"></div>
<span class="t" style="top:209.90px;font-size:7.8px;line-height:7.8px;color:#202020;right:55.50px;transform:scaleX(0.845);transform-origin:100% 0;">10</span>
<div class="b" style="left:746.50px;top:208.50px;width:39.50px;height:12.50px;background:#fcd8d6;"></div>
<div class="b" style="left:785.40px;top:208.50px;width:0.80px;height:12.50px;background:rgba(255,255,255,0.4);"></div>
<span class="t" style="top:209.90px;font-size:7.8px;line-height:7.8px;color:#202020;right:16.00px;transform:scaleX(0.845);transform-origin:100% 0;">160</span>
<div class="b" style="left:23.00px;top:221.00px;width:763.00px;height:12.50px;background:#f2f1f1;"></div>
<div class="b" style="left:4.30px;top:222.00px;width:18.70px;height:0.80px;background:#ccc6ec;"></div>
<div class="b" style="left:4.30px;top:233.00px;width:18.70px;height:1.00px;background:#3a3866;"></div>
<span class="t" style="top:224.60px;font-size:7.8px;line-height:7.8px;color:#1e1c30;left:7.50px;transform:scaleX(1.0);transform-origin:0 0;-webkit-text-stroke:0;">8</span>
<div class="b" style="left:71.90px;top:221.00px;width:0.80px;height:12.50px;background:rgba(255,255,255,0.4);"></div>
<span class="t" style="top:222.40px;font-size:7.8px;line-height:7.8px;color:#202020;left:25.30px;transform:scaleX(0.845);transform-origin:0 0;">JYN-123</span>
<div class="b" style="left:121.40px;top:221.00px;width:0.80px;height:12.50px;background:rgba(255,255,255,0.4);"></div>
<span class="t" style="top:222.40px;font-size:7.8px;line-height:7.8px;color:#202020;left:74.80px;transform:scaleX(0.845);transform-origin:0 0;">Nagy Mihály</span>
<div class="b" style="left:236.40px;top:221.00px;width:0.80px;height:12.50px;background:rgba(255,255,255,0.4);"></div>
<span class="t" style="top:222.40px;font-size:7.8px;line-height:7.8px;color:#202020;left:124.30px;transform:scaleX(0.845);transform-origin:0 0;">071109-BÁCS/1</span>
<div class="b" style="left:270.40px;top:221.00px;width:0.80px;height:12.50px;background:rgba(255,255,255,0.4);"></div>
<span class="t" style="top:222.40px;font-size:7.8px;line-height:7.8px;color:#202020;left:239.30px;transform:scaleX(0.845);transform-origin:0 0;">Tervezett</span>
<div class="b" style="left:314.90px;top:221.00px;width:0.80px;height:12.50px;background:rgba(255,255,255,0.4);"></div>
<span class="t" style="top:222.40px;font-size:7.8px;line-height:7.8px;color:#202020;left:273.30px;transform:scaleX(0.845);transform-origin:0 0;">Nagykőrös</span>
<div class="b" style="left:364.90px;top:221.00px;width:0.80px;height:12.50px;background:rgba(255,255,255,0.4);"></div>
<span class="t" style="top:222.40px;font-size:7.8px;line-height:7.8px;color:#202020;left:317.80px;transform:scaleX(0.845);transform-origin:0 0;">Szolnoki út 23.</span>
<div class="b" style="left:411.90px;top:221.00px;width:0.80px;height:12.50px;background:rgba(255,255,255,0.4);"></div>
<span class="t" style="top:222.40px;font-size:7.8px;line-height:7.8px;color:#202020;left:367.80px;transform:scaleX(0.845);transform-origin:0 0;">Szabó József</span>
<div class="b" style="left:467.90px;top:221.00px;width:0.80px;height:12.50px;background:rgba(255,255,255,0.4);"></div>
<div class="b" style="left:525.40px;top:221.00px;width:0.80px;height:12.50px;background:rgba(255,255,255,0.4);"></div>
<span class="t" style="top:222.40px;font-size:7.8px;line-height:7.8px;color:#202020;right:276.00px;transform:scaleX(0.845);transform-origin:100% 0;">150</span>
<div class="b" style="left:556.90px;top:221.00px;width:0.80px;height:12.50px;background:rgba(255,255,255,0.4);"></div>
<div class="b" style="left:606.90px;top:221.00px;width:0.80px;height:12.50px;background:rgba(255,255,255,0.4);"></div>
<div class="b" style="left:659.40px;top:221.00px;width:0.80px;height:12.50px;background:rgba(255,255,255,0.4);"></div>
<div class="b" style="left:700.90px;top:221.00px;width:0.80px;height:12.50px;background:rgba(255,255,255,0.4);"></div>
<div class="b" style="left:745.90px;top:221.00px;width:0.80px;height:12.50px;background:rgba(255,255,255,0.4);"></div>
<div class="b" style="left:746.50px;top:221.00px;width:39.50px;height:12.50px;background:#fcd8d6;"></div>
<div class="b" style="left:785.40px;top:221.00px;width:0.80px;height:12.50px;background:rgba(255,255,255,0.4);"></div>
<span class="t" style="top:222.40px;font-size:7.8px;line-height:7.8px;color:#202020;right:16.00px;transform:scaleX(0.845);transform-origin:100% 0;">150</span>
<div class="b" style="left:23.00px;top:233.50px;width:763.00px;height:12.50px;background:#ffc2fc;"></div>
<div class="b" style="left:4.30px;top:234.50px;width:18.70px;height:0.80px;background:#ccc6ec;"></div>
<div class="b" style="left:4.30px;top:245.50px;width:18.70px;height:1.00px;background:#3a3866;"></div>
<span class="t" style="top:237.10px;font-size:7.8px;line-height:7.8px;color:#1e1c30;left:7.50px;transform:scaleX(1.0);transform-origin:0 0;-webkit-text-stroke:0;">9</span>
<div class="b" style="left:71.90px;top:233.50px;width:0.80px;height:12.50px;background:rgba(255,255,255,0.4);"></div>
<span class="t" style="top:234.90px;font-size:7.8px;line-height:7.8px;color:#3a1c48;left:25.30px;transform:scaleX(0.845);transform-origin:0 0;">JYN-123</span>
<div class="b" style="left:121.40px;top:233.50px;width:0.80px;height:12.50px;background:rgba(255,255,255,0.4);"></div>
<span class="t" style="top:234.90px;font-size:7.8px;line-height:7.8px;color:#3a1c48;left:74.80px;transform:scaleX(0.845);transform-origin:0 0;">Összesen:</span>
<div class="b" style="left:236.40px;top:233.50px;width:0.80px;height:12.50px;background:rgba(255,255,255,0.4);"></div>
<div class="b" style="left:270.40px;top:233.50px;width:0.80px;height:12.50px;background:rgba(255,255,255,0.4);"></div>
<div class="b" style="left:314.90px;top:233.50px;width:0.80px;height:12.50px;background:rgba(255,255,255,0.4);"></div>
<div class="b" style="left:364.90px;top:233.50px;width:0.80px;height:12.50px;background:rgba(255,255,255,0.4);"></div>
<div class="b" style="left:411.90px;top:233.50px;width:0.80px;height:12.50px;background:rgba(255,255,255,0.4);"></div>
<div class="b" style="left:467.90px;top:233.50px;width:0.80px;height:12.50px;background:rgba(255,255,255,0.4);"></div>
<span class="t" style="top:234.90px;font-size:7.8px;line-height:7.8px;color:#3a1c48;right:333.50px;transform:scaleX(0.845);transform-origin:100% 0;">150</span>
<div class="b" style="left:525.40px;top:233.50px;width:0.80px;height:12.50px;background:rgba(255,255,255,0.4);"></div>
<span class="t" style="top:234.90px;font-size:7.8px;line-height:7.8px;color:#3a1c48;right:276.00px;transform:scaleX(0.845);transform-origin:100% 0;">150</span>
<div class="b" style="left:556.90px;top:233.50px;width:0.80px;height:12.50px;background:rgba(255,255,255,0.4);"></div>
<span class="t" style="top:234.90px;font-size:7.8px;line-height:7.8px;color:#3a1c48;right:244.50px;transform:scaleX(0.845);transform-origin:100% 0;">0</span>
<div class="b" style="left:606.90px;top:233.50px;width:0.80px;height:12.50px;background:rgba(255,255,255,0.4);"></div>
<span class="t" style="top:234.90px;font-size:7.8px;line-height:7.8px;color:#3a1c48;right:194.50px;transform:scaleX(0.845);transform-origin:100% 0;">0</span>
<div class="b" style="left:659.40px;top:233.50px;width:0.80px;height:12.50px;background:rgba(255,255,255,0.4);"></div>
<span class="t" style="top:234.90px;font-size:7.8px;line-height:7.8px;color:#3a1c48;right:142.00px;transform:scaleX(0.845);transform-origin:100% 0;">0</span>
<div class="b" style="left:700.90px;top:233.50px;width:0.80px;height:12.50px;background:rgba(255,255,255,0.4);"></div>
<span class="t" style="top:234.90px;font-size:7.8px;line-height:7.8px;color:#3a1c48;right:100.50px;transform:scaleX(0.845);transform-origin:100% 0;">0</span>
<div class="b" style="left:745.90px;top:233.50px;width:0.80px;height:12.50px;background:rgba(255,255,255,0.4);"></div>
<span class="t" style="top:234.90px;font-size:7.8px;line-height:7.8px;color:#3a1c48;right:55.50px;transform:scaleX(0.845);transform-origin:100% 0;">10</span>
<div class="b" style="left:746.50px;top:233.50px;width:39.50px;height:12.50px;background:#f9b6b4;"></div>
<div class="b" style="left:785.40px;top:233.50px;width:0.80px;height:12.50px;background:rgba(255,255,255,0.4);"></div>
<span class="t" style="top:234.90px;font-size:7.8px;line-height:7.8px;color:#3a1c48;right:16.00px;transform:scaleX(0.845);transform-origin:100% 0;">310</span>
<div class="b" style="left:23.00px;top:246.00px;width:763.00px;height:12.50px;background:#f2f1f1;"></div>
<div class="b" style="left:4.30px;top:247.00px;width:18.70px;height:0.80px;background:#ccc6ec;"></div>
<div class="b" style="left:4.30px;top:258.00px;width:18.70px;height:1.00px;background:#3a3866;"></div>
<span class="t" style="top:249.60px;font-size:7.8px;line-height:7.8px;color:#1e1c30;left:7.50px;transform:scaleX(1.0);transform-origin:0 0;-webkit-text-stroke:0;">10</span>
<div class="b" style="left:71.90px;top:246.00px;width:0.80px;height:12.50px;background:rgba(255,255,255,0.4);"></div>
<span class="t" style="top:247.40px;font-size:7.8px;line-height:7.8px;color:#202020;left:25.30px;transform:scaleX(0.845);transform-origin:0 0;">KLM-123</span>
<div class="b" style="left:121.40px;top:246.00px;width:0.80px;height:12.50px;background:rgba(255,255,255,0.4);"></div>
<span class="t" style="top:247.40px;font-size:7.8px;line-height:7.8px;color:#202020;left:74.80px;transform:scaleX(0.845);transform-origin:0 0;">Szűcs József</span>
<div class="b" style="left:236.40px;top:246.00px;width:0.80px;height:12.50px;background:rgba(255,255,255,0.4);"></div>
<span class="t" style="top:247.40px;font-size:7.8px;line-height:7.8px;color:#202020;left:124.30px;transform:scaleX(0.845);transform-origin:0 0;">071109-TÚRA/1</span>
<div class="b" style="left:270.40px;top:246.00px;width:0.80px;height:12.50px;background:rgba(255,255,255,0.4);"></div>
<span class="t" style="top:247.40px;font-size:7.8px;line-height:7.8px;color:#202020;left:239.30px;transform:scaleX(0.845);transform-origin:0 0;">Tervezett</span>
<div class="b" style="left:314.90px;top:246.00px;width:0.80px;height:12.50px;background:rgba(255,255,255,0.4);"></div>
<span class="t" style="top:247.40px;font-size:7.8px;line-height:7.8px;color:#202020;left:273.30px;transform:scaleX(0.845);transform-origin:0 0;">Nagykanizsa</span>
<div class="b" style="left:364.90px;top:246.00px;width:0.80px;height:12.50px;background:rgba(255,255,255,0.4);"></div>
<span class="t" style="top:247.40px;font-size:7.8px;line-height:7.8px;color:#202020;left:317.80px;transform:scaleX(0.845);transform-origin:0 0;">Szőlő u. 7.</span>
<div class="b" style="left:411.90px;top:246.00px;width:0.80px;height:12.50px;background:rgba(255,255,255,0.4);"></div>
<span class="t" style="top:247.40px;font-size:7.8px;line-height:7.8px;color:#202020;left:367.80px;transform:scaleX(0.845);transform-origin:0 0;">Kis Jolán</span>
<div class="b" style="left:467.90px;top:246.00px;width:0.80px;height:12.50px;background:rgba(255,255,255,0.4);"></div>
<span class="t" style="top:247.40px;font-size:7.8px;line-height:7.8px;color:#202020;right:333.50px;transform:scaleX(0.845);transform-origin:100% 0;">150</span>
<div class="b" style="left:525.40px;top:246.00px;width:0.80px;height:12.50px;background:rgba(255,255,255,0.4);"></div>
<div class="b" style="left:556.90px;top:246.00px;width:0.80px;height:12.50px;background:rgba(255,255,255,0.4);"></div>
<div class="b" style="left:606.90px;top:246.00px;width:0.80px;height:12.50px;background:rgba(255,255,255,0.4);"></div>
<div class="b" style="left:659.40px;top:246.00px;width:0.80px;height:12.50px;background:rgba(255,255,255,0.4);"></div>
<div class="b" style="left:700.90px;top:246.00px;width:0.80px;height:12.50px;background:rgba(255,255,255,0.4);"></div>
<div class="b" style="left:745.90px;top:246.00px;width:0.80px;height:12.50px;background:rgba(255,255,255,0.4);"></div>
<div class="b" style="left:746.50px;top:246.00px;width:39.50px;height:12.50px;background:#fcd8d6;"></div>
<div class="b" style="left:785.40px;top:246.00px;width:0.80px;height:12.50px;background:rgba(255,255,255,0.4);"></div>
<span class="t" style="top:247.40px;font-size:7.8px;line-height:7.8px;color:#202020;right:16.00px;transform:scaleX(0.845);transform-origin:100% 0;">150</span>
<div class="b" style="left:23.00px;top:258.50px;width:763.00px;height:12.50px;background:#ffc2fc;"></div>
<div class="b" style="left:4.30px;top:259.50px;width:18.70px;height:0.80px;background:#ccc6ec;"></div>
<div class="b" style="left:4.30px;top:270.50px;width:18.70px;height:1.00px;background:#3a3866;"></div>
<span class="t" style="top:262.10px;font-size:7.8px;line-height:7.8px;color:#1e1c30;left:7.50px;transform:scaleX(1.0);transform-origin:0 0;-webkit-text-stroke:0;">11</span>
<div class="b" style="left:23.00px;top:258.50px;width:49.50px;height:12.50px;background:#f40000;"></div>
<div class="b" style="left:71.90px;top:258.50px;width:0.80px;height:12.50px;background:rgba(255,255,255,0.4);"></div>
<span class="t" style="top:259.90px;font-size:7.8px;line-height:7.8px;color:#ffb4b4;left:25.30px;transform:scaleX(0.845);transform-origin:0 0;">KLM-123</span>
<div class="b" style="left:72.50px;top:258.50px;width:49.50px;height:12.50px;background:#f40000;"></div>
<div class="b" style="left:121.40px;top:258.50px;width:0.80px;height:12.50px;background:rgba(255,255,255,0.4);"></div>
<span class="t" style="top:259.90px;font-size:7.8px;line-height:7.8px;color:#ffb4b4;left:74.80px;transform:scaleX(0.845);transform-origin:0 0;">Összesen:</span>
<div class="b" style="left:122.00px;top:258.50px;width:115.00px;height:12.50px;background:#f40000;"></div>
<div class="b" style="left:236.40px;top:258.50px;width:0.80px;height:12.50px;background:rgba(255,255,255,0.4);"></div>
<span class="t" style="top:259.90px;font-size:7.8px;line-height:7.8px;color:#ffb4b4;left:124.30px;transform:scaleX(0.845);transform-origin:0 0;">Súly korláton (5000-15000 Kg) kívül!</span>
<div class="b" style="left:270.40px;top:258.50px;width:0.80px;height:12.50px;background:rgba(255,255,255,0.4);"></div>
<div class="b" style="left:314.90px;top:258.50px;width:0.80px;height:12.50px;background:rgba(255,255,255,0.4);"></div>
<div class="b" style="left:364.90px;top:258.50px;width:0.80px;height:12.50px;background:rgba(255,255,255,0.4);"></div>
<div class="b" style="left:411.90px;top:258.50px;width:0.80px;height:12.50px;background:rgba(255,255,255,0.4);"></div>
<div class="b" style="left:467.90px;top:258.50px;width:0.80px;height:12.50px;background:rgba(255,255,255,0.4);"></div>
<span class="t" style="top:259.90px;font-size:7.8px;line-height:7.8px;color:#3a1c48;right:333.50px;transform:scaleX(0.845);transform-origin:100% 0;">150</span>
<div class="b" style="left:525.40px;top:258.50px;width:0.80px;height:12.50px;background:rgba(255,255,255,0.4);"></div>
<div class="b" style="left:556.90px;top:258.50px;width:0.80px;height:12.50px;background:rgba(255,255,255,0.4);"></div>
<div class="b" style="left:606.90px;top:258.50px;width:0.80px;height:12.50px;background:rgba(255,255,255,0.4);"></div>
<div class="b" style="left:659.40px;top:258.50px;width:0.80px;height:12.50px;background:rgba(255,255,255,0.4);"></div>
<div class="b" style="left:700.90px;top:258.50px;width:0.80px;height:12.50px;background:rgba(255,255,255,0.4);"></div>
<div class="b" style="left:745.90px;top:258.50px;width:0.80px;height:12.50px;background:rgba(255,255,255,0.4);"></div>
<div class="b" style="left:746.50px;top:258.50px;width:39.50px;height:12.50px;background:#f40404;"></div>
<div class="b" style="left:785.40px;top:258.50px;width:0.80px;height:12.50px;background:rgba(255,255,255,0.4);"></div>
<span class="t" style="top:259.90px;font-size:7.8px;line-height:7.8px;color:#ffc0c0;right:16.00px;transform:scaleX(0.845);transform-origin:100% 0;">150</span>
<div class="b" style="left:23.00px;top:271.00px;width:763.00px;height:12.50px;background:#86c088;"></div>
<div class="b" style="left:4.30px;top:272.00px;width:18.70px;height:0.80px;background:#ccc6ec;"></div>
<div class="b" style="left:4.30px;top:283.00px;width:18.70px;height:1.00px;background:#3a3866;"></div>
<span class="t" style="top:274.60px;font-size:7.8px;line-height:7.8px;color:#1e1c30;left:7.50px;transform:scaleX(1.0);transform-origin:0 0;-webkit-text-stroke:0;">12</span>
<div class="b" style="left:71.90px;top:271.00px;width:0.80px;height:12.50px;background:rgba(255,255,255,0.4);"></div>
<span class="t" style="top:272.40px;font-size:7.8px;line-height:7.8px;color:#14280f;left:25.30px;transform:scaleX(0.845);transform-origin:0 0;">Mindösszesen:</span>
<div class="b" style="left:121.40px;top:271.00px;width:0.80px;height:12.50px;background:rgba(255,255,255,0.4);"></div>
<div class="b" style="left:236.40px;top:271.00px;width:0.80px;height:12.50px;background:rgba(255,255,255,0.4);"></div>
<div class="b" style="left:270.40px;top:271.00px;width:0.80px;height:12.50px;background:rgba(255,255,255,0.4);"></div>
<div class="b" style="left:314.90px;top:271.00px;width:0.80px;height:12.50px;background:rgba(255,255,255,0.4);"></div>
<div class="b" style="left:364.90px;top:271.00px;width:0.80px;height:12.50px;background:rgba(255,255,255,0.4);"></div>
<div class="b" style="left:411.90px;top:271.00px;width:0.80px;height:12.50px;background:rgba(255,255,255,0.4);"></div>
<div class="b" style="left:467.90px;top:271.00px;width:0.80px;height:12.50px;background:rgba(255,255,255,0.4);"></div>
<span class="t" style="top:272.40px;font-size:7.8px;line-height:7.8px;color:#14280f;right:333.50px;transform:scaleX(0.845);transform-origin:100% 0;">660</span>
<div class="b" style="left:525.40px;top:271.00px;width:0.80px;height:12.50px;background:rgba(255,255,255,0.4);"></div>
<span class="t" style="top:272.40px;font-size:7.8px;line-height:7.8px;color:#14280f;right:276.00px;transform:scaleX(0.845);transform-origin:100% 0;">225</span>
<div class="b" style="left:556.90px;top:271.00px;width:0.80px;height:12.50px;background:rgba(255,255,255,0.4);"></div>
<span class="t" style="top:272.40px;font-size:7.8px;line-height:7.8px;color:#14280f;right:244.50px;transform:scaleX(0.845);transform-origin:100% 0;">0</span>
<div class="b" style="left:606.90px;top:271.00px;width:0.80px;height:12.50px;background:rgba(255,255,255,0.4);"></div>
<span class="t" style="top:272.40px;font-size:7.8px;line-height:7.8px;color:#14280f;right:194.50px;transform:scaleX(0.845);transform-origin:100% 0;">400</span>
<div class="b" style="left:659.40px;top:271.00px;width:0.80px;height:12.50px;background:rgba(255,255,255,0.4);"></div>
<span class="t" style="top:272.40px;font-size:7.8px;line-height:7.8px;color:#14280f;right:142.00px;transform:scaleX(0.845);transform-origin:100% 0;">200</span>
<div class="b" style="left:700.90px;top:271.00px;width:0.80px;height:12.50px;background:rgba(255,255,255,0.4);"></div>
<span class="t" style="top:272.40px;font-size:7.8px;line-height:7.8px;color:#14280f;right:100.50px;transform:scaleX(0.845);transform-origin:100% 0;">0</span>
<div class="b" style="left:745.90px;top:271.00px;width:0.80px;height:12.50px;background:rgba(255,255,255,0.4);"></div>
<span class="t" style="top:272.40px;font-size:7.8px;line-height:7.8px;color:#14280f;right:55.50px;transform:scaleX(0.845);transform-origin:100% 0;">40</span>
<div class="b" style="left:746.50px;top:271.00px;width:39.50px;height:12.50px;background:#063606;"></div>
<div class="b" style="left:785.40px;top:271.00px;width:0.80px;height:12.50px;background:rgba(255,255,255,0.4);"></div>
<span class="t" style="top:272.40px;font-size:7.8px;line-height:7.8px;color:#e8f0e8;right:16.00px;transform:scaleX(0.845);transform-origin:100% 0;">1 525</span>
<div class="b" style="left:4.30px;top:133.70px;width:18.70px;height:1.10px;background:#2a2850;"></div>
<div class="b" style="left:23.00px;top:133.50px;width:49.50px;height:13.00px;border:1.3px solid #1a1a1a;"></div>
<div class="b" style="left:23.00px;top:246.50px;width:214.50px;height:26.70px;border:1.3px solid #1a1830;"></div>
<div class="b" style="left:4.30px;top:134.00px;width:1.60px;height:12.00px;background:#141228;"></div>
<div class="b" style="left:3.30px;top:413.00px;width:789.00px;height:49.70px;background:#ffffff;border-left:1px solid #2a2850;border-top:1.5px solid #2a2850;border-right:1px solid #d0caf0;"></div>
<div class="b" style="left:4.30px;top:414.50px;width:18.70px;height:48.20px;background:#b2aade;border-right:1px solid #2a2850;"></div>
<div class="b" style="left:23.00px;top:414.20px;width:768.70px;height:12.80px;background:#aca4d8;"></div>
<div class="b" style="left:23.00px;top:425.90px;width:497.00px;height:1.20px;background:#2a2850;"></div>
<div class="b" style="left:4.30px;top:426.40px;width:18.70px;height:1.20px;background:#2a2850;"></div>
<div class="b" style="left:23.00px;top:427.00px;width:497.00px;height:12.50px;background:#ffffd6;"></div>
<div class="b" style="left:23.60px;top:414.70px;width:1.00px;height:11.50px;background:#d4cef0;"></div>
<div class="b" style="left:72.60px;top:414.70px;width:1.00px;height:11.50px;background:#d4cef0;"></div>
<div class="b" style="left:118.10px;top:414.70px;width:1.00px;height:11.50px;background:#d4cef0;"></div>
<div class="b" style="left:164.10px;top:414.70px;width:1.00px;height:11.50px;background:#d4cef0;"></div>
<div class="b" style="left:219.60px;top:414.70px;width:1.00px;height:11.50px;background:#d4cef0;"></div>
<div class="b" style="left:277.10px;top:414.70px;width:1.00px;height:11.50px;background:#d4cef0;"></div>
<div class="b" style="left:308.10px;top:414.70px;width:1.00px;height:11.50px;background:#d4cef0;"></div>
<div class="b" style="left:358.60px;top:414.70px;width:1.00px;height:11.50px;background:#d4cef0;"></div>
<div class="b" style="left:411.10px;top:414.70px;width:1.00px;height:11.50px;background:#d4cef0;"></div>
<div class="b" style="left:452.60px;top:414.70px;width:1.00px;height:11.50px;background:#d4cef0;"></div>
<div class="b" style="left:497.60px;top:414.70px;width:1.00px;height:11.50px;background:#d4cef0;"></div>
<div class="b" style="left:71.50px;top:414.50px;width:1.00px;height:12.50px;background:#2a2850;"></div>
<span class="t" style="top:416.60px;font-size:7.8px;line-height:7.8px;color:#161428;left:26.00px;transform:scaleX(0.845);transform-origin:0 0;">Túra</span>
<div class="b" style="left:71.40px;top:427.00px;width:0.80px;height:12.50px;background:rgba(255,255,255,0.6);"></div>
<span class="t" style="top:428.40px;font-size:7.8px;line-height:7.8px;color:#303028;left:25.30px;transform:scaleX(0.845);transform-origin:0 0;">071107-???/1</span>
<div class="b" style="left:117.00px;top:414.50px;width:1.00px;height:12.50px;background:#2a2850;"></div>
<span class="t" style="top:416.60px;font-size:7.8px;line-height:7.8px;color:#161428;left:75.00px;transform:scaleX(0.845);transform-origin:0 0;">Túra státusz</span>
<div class="b" style="left:116.90px;top:427.00px;width:0.80px;height:12.50px;background:rgba(255,255,255,0.6);"></div>
<span class="t" style="top:428.40px;font-size:7.8px;line-height:7.8px;color:#303028;left:74.30px;transform:scaleX(0.845);transform-origin:0 0;">Tervezett</span>
<div class="b" style="left:163.00px;top:414.50px;width:1.00px;height:12.50px;background:#2a2850;"></div>
<span class="t" style="top:416.60px;font-size:7.8px;line-height:7.8px;color:#161428;left:120.50px;transform:scaleX(0.845);transform-origin:0 0;">Szállítólevél</span>
<div class="b" style="left:162.90px;top:427.00px;width:0.80px;height:12.50px;background:rgba(255,255,255,0.6);"></div>
<div class="b" style="left:218.50px;top:414.50px;width:1.00px;height:12.50px;background:#2a2850;"></div>
<span class="t" style="top:416.60px;font-size:7.8px;line-height:7.8px;color:#161428;left:166.50px;transform:scaleX(0.845);transform-origin:0 0;">Előhűtött csirke</span>
<div class="b" style="left:218.40px;top:427.00px;width:0.80px;height:12.50px;background:rgba(255,255,255,0.6);"></div>
<span class="t" style="top:428.40px;font-size:7.8px;line-height:7.8px;color:#303028;right:582.50px;transform:scaleX(0.845);transform-origin:100% 0;">90.0</span>
<div class="b" style="left:276.00px;top:414.50px;width:1.00px;height:12.50px;background:#2a2850;"></div>
<span class="t" style="top:416.60px;font-size:7.8px;line-height:7.8px;color:#161428;left:222.00px;transform:scaleX(0.845);transform-origin:0 0;">Előhűtött pulyka</span>
<div class="b" style="left:275.90px;top:427.00px;width:0.80px;height:12.50px;background:rgba(255,255,255,0.6);"></div>
<div class="b" style="left:307.00px;top:414.50px;width:1.00px;height:12.50px;background:#2a2850;"></div>
<span class="t" style="top:416.60px;font-size:7.8px;line-height:7.8px;color:#161428;left:279.50px;transform:scaleX(0.845);transform-origin:0 0;">Előállat</span>
<div class="b" style="left:306.90px;top:427.00px;width:0.80px;height:12.50px;background:rgba(255,255,255,0.6);"></div>
<div class="b" style="left:357.50px;top:414.50px;width:1.00px;height:12.50px;background:#2a2850;"></div>
<span class="t" style="top:416.60px;font-size:7.8px;line-height:7.8px;color:#161428;left:310.50px;transform:scaleX(0.845);transform-origin:0 0;">Fagyos csirke</span>
<div class="b" style="left:357.40px;top:427.00px;width:0.80px;height:12.50px;background:rgba(255,255,255,0.6);"></div>
<div class="b" style="left:410.00px;top:414.50px;width:1.00px;height:12.50px;background:#2a2850;"></div>
<span class="t" style="top:416.60px;font-size:7.8px;line-height:7.8px;color:#161428;left:361.00px;transform:scaleX(0.845);transform-origin:0 0;">Fagyos pulyka</span>
<div class="b" style="left:409.90px;top:427.00px;width:0.80px;height:12.50px;background:rgba(255,255,255,0.6);"></div>
<div class="b" style="left:451.50px;top:414.50px;width:1.00px;height:12.50px;background:#2a2850;"></div>
<span class="t" style="top:416.60px;font-size:7.8px;line-height:7.8px;color:#161428;left:413.50px;transform:scaleX(0.845);transform-origin:0 0;">Göngyöleg</span>
<div class="b" style="left:451.40px;top:427.00px;width:0.80px;height:12.50px;background:rgba(255,255,255,0.6);"></div>
<div class="b" style="left:496.50px;top:414.50px;width:1.00px;height:12.50px;background:#2a2850;"></div>
<span class="t" style="top:416.60px;font-size:7.8px;line-height:7.8px;color:#161428;left:455.00px;transform:scaleX(0.845);transform-origin:0 0;">Készítmény</span>
<div class="b" style="left:496.40px;top:427.00px;width:0.80px;height:12.50px;background:rgba(255,255,255,0.6);"></div>
<span class="t" style="top:428.40px;font-size:7.8px;line-height:7.8px;color:#303028;right:304.50px;transform:scaleX(0.845);transform-origin:100% 0;">10.0</span>
<div class="b" style="left:519.50px;top:414.50px;width:1.00px;height:12.50px;background:#2a2850;"></div>
<span class="t" style="top:416.60px;font-size:7.8px;line-height:7.8px;color:#161428;left:500.00px;transform:scaleX(0.845);transform-origin:0 0;">Súly</span>
<div class="b" style="left:519.40px;top:427.00px;width:0.80px;height:12.50px;background:rgba(255,255,255,0.6);"></div>
<span class="t" style="top:428.40px;font-size:7.8px;line-height:7.8px;color:#303028;right:281.50px;transform:scaleX(0.845);transform-origin:100% 0;">100.0</span>
<div class="b" style="left:4.30px;top:438.90px;width:18.70px;height:1.00px;background:#3a3866;"></div>
<span class="t" style="top:429.60px;font-size:7.8px;line-height:7.8px;color:#1e1c30;left:7.50px;transform:scaleX(1.0);transform-origin:0 0;font-weight:bold;">1</span>
<div class="b" style="left:4.30px;top:427.50px;width:1.60px;height:12.00px;background:#141228;"></div>
<div class="b" style="left:700.00px;top:463.60px;width:93.00px;height:15.40px;background:#b0a8dc;border-top:1px solid #dcd6f2;border-left:1px solid #dcd6f2;border-right:1.3px solid #2a2850;border-bottom:1.3px solid #2a2850;"></div>
<span class="t" style="top:467.70px;font-size:7.8px;line-height:7.8px;color:#161428;left:746.50px;transform:translateX(-50%) scaleX(0.845);transform-origin:50% 0;">Áthelyezés</span>
<div class="b" style="left:2.00px;top:483.00px;width:40.50px;height:10.50px;background:#b2aadc;border-top:1px solid #58549a;border-left:1px solid #58549a;border-bottom:1px solid #dcd6f2;border-right:1px solid #dcd6f2;"></div>
<div class="b" style="left:43.00px;top:483.00px;width:79.50px;height:10.50px;background:#b2aadc;border-top:1px solid #58549a;border-left:1px solid #58549a;border-bottom:1px solid #dcd6f2;border-right:1px solid #dcd6f2;"></div>
<div class="b" style="left:123.00px;top:483.00px;width:15.50px;height:10.50px;background:#b2aadc;border-top:1px solid #58549a;border-left:1px solid #58549a;border-bottom:1px solid #dcd6f2;border-right:1px solid #dcd6f2;"></div>
<div class="b" style="left:139.50px;top:483.00px;width:654.00px;height:10.50px;background:#b2aadc;border-top:1px solid #58549a;border-left:1px solid #58549a;border-bottom:1px solid #dcd6f2;border-right:1px solid #dcd6f2;"></div>
<span class="t" style="top:484.60px;font-size:7.8px;line-height:7.8px;color:#161428;left:3.00px;transform:scaleX(0.885);transform-origin:0 0;">-v1.93pre4H</span>
<span class="t" style="top:484.60px;font-size:7.8px;line-height:7.8px;color:#161428;left:44.80px;transform:scaleX(0.9);transform-origin:0 0;">1 / 12</span>
<span class="t" style="top:484.77px;font-size:7.6px;line-height:7.6px;color:#161428;left:140.50px;transform:scaleX(0.87);transform-origin:0 0;">Rendszám</span>
<svg class="b" style="left:124px;top:484px" width="10" height="9" viewBox="0 0 10 9"><circle cx="4.8" cy="4.8" r="3.6" fill="#ffffff" stroke="#d8d4ee" stroke-width="0.8"/><path d="M1.6 6 A3.4 3.4 0 0 1 6.4 1.6" fill="none" stroke="#303038" stroke-width="1.2"/></svg>
<div class="b" style="left:0.00px;top:494.00px;width:797.00px;height:1.30px;background:#2a2850;"></div>
<div class="b" style="left:795.30px;top:62.50px;width:1.70px;height:432.00px;background:#3a3470;"></div>
<div class="b" style="left:797.00px;top:49.00px;width:3.00px;height:451.00px;background:#c0b8ea;"></div>
<div class="b" style="left:0.00px;top:49.00px;width:1.20px;height:451.00px;background:#c2baea;"></div>

</div></body></html>
